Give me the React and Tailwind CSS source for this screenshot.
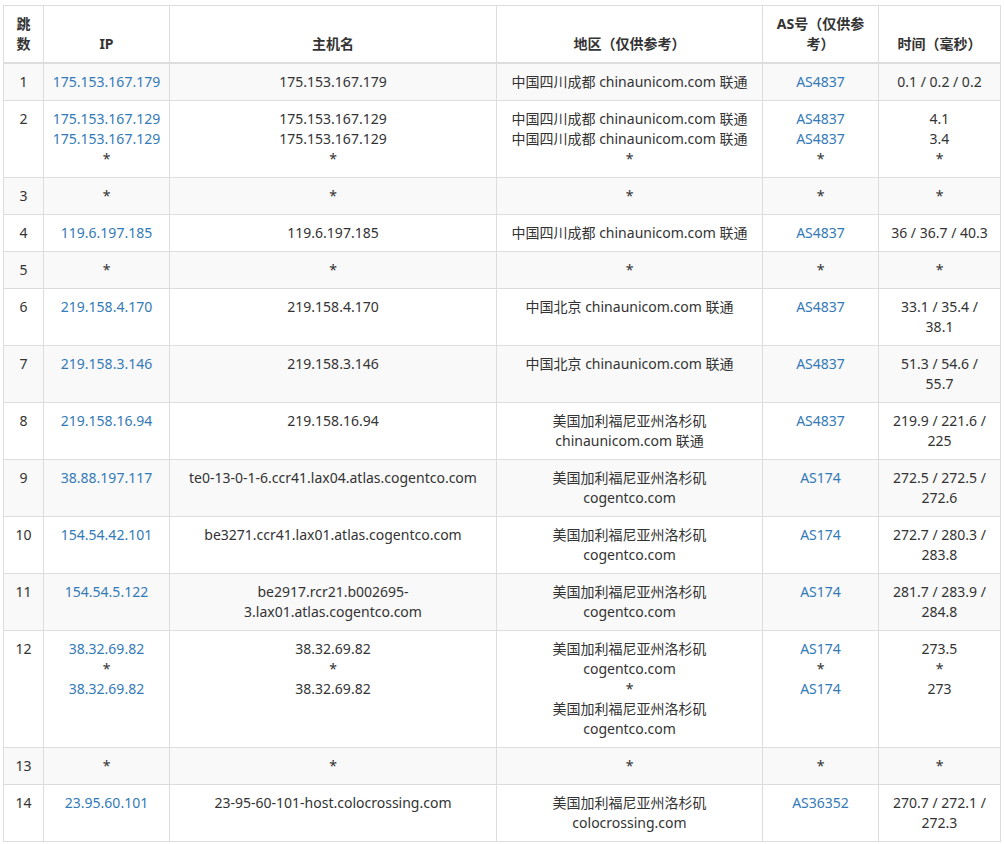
const rows = [
  ["1", ["175.153.167.179"], ["175.153.167.179"], ["中国四川成都 chinaunicom.com 联通"], ["AS4837"], ["0.1 / 0.2 / 0.2"]],
  ["2", ["175.153.167.129", "175.153.167.129", "*"], ["175.153.167.129", "175.153.167.129", "*"], ["中国四川成都 chinaunicom.com 联通", "中国四川成都 chinaunicom.com 联通", "*"], ["AS4837", "AS4837", "*"], ["4.1", "3.4", "*"]],
  ["3", ["*"], ["*"], ["*"], ["*"], ["*"]],
  ["4", ["119.6.197.185"], ["119.6.197.185"], ["中国四川成都 chinaunicom.com 联通"], ["AS4837"], ["36 / 36.7 / 40.3"]],
  ["5", ["*"], ["*"], ["*"], ["*"], ["*"]],
  ["6", ["219.158.4.170"], ["219.158.4.170"], ["中国北京 chinaunicom.com 联通"], ["AS4837"], ["33.1 / 35.4 /", "38.1"]],
  ["7", ["219.158.3.146"], ["219.158.3.146"], ["中国北京 chinaunicom.com 联通"], ["AS4837"], ["51.3 / 54.6 /", "55.7"]],
  ["8", ["219.158.16.94"], ["219.158.16.94"], ["美国加利福尼亚州洛杉矶", "chinaunicom.com 联通"], ["AS4837"], ["219.9 / 221.6 /", "225"]],
  ["9", ["38.88.197.117"], ["te0-13-0-1-6.ccr41.lax04.atlas.cogentco.com"], ["美国加利福尼亚州洛杉矶", "cogentco.com"], ["AS174"], ["272.5 / 272.5 /", "272.6"]],
  ["10", ["154.54.42.101"], ["be3271.ccr41.lax01.atlas.cogentco.com"], ["美国加利福尼亚州洛杉矶", "cogentco.com"], ["AS174"], ["272.7 / 280.3 /", "283.8"]],
  ["11", ["154.54.5.122"], ["be2917.rcr21.b002695-", "3.lax01.atlas.cogentco.com"], ["美国加利福尼亚州洛杉矶", "cogentco.com"], ["AS174"], ["281.7 / 283.9 /", "284.8"]],
  ["12", ["38.32.69.82", "*", "38.32.69.82"], ["38.32.69.82", "*", "38.32.69.82"], ["美国加利福尼亚州洛杉矶", "cogentco.com", "*", "美国加利福尼亚州洛杉矶", "cogentco.com"], ["AS174", "*", "AS174"], ["273.5", "*", "273"]],
  ["13", ["*"], ["*"], ["*"], ["*"], ["*"]],
  ["14", ["23.95.60.101"], ["23-95-60-101-host.colocrossing.com"], ["美国加利福尼亚州洛杉矶", "colocrossing.com"], ["AS36352"], ["270.7 / 272.1 /", "272.3"]],
];

function Lines({ items, link }) {
  return items.map((t, i) => (
    <div key={i} className={link && t !== "*" ? "text-[#337ab7]" : ""}>{t}</div>
  ));
}

export default function App() {
  const th = "border border-[#ddd] border-b-2 px-2 py-2 align-bottom text-center font-bold";
  const td = "border border-[#ddd] px-2 py-2 align-top text-center";
  return (
    <div className="bg-white pt-[5px] pl-[3px] w-[1004px] min-h-[844px] text-[14px] leading-[20px] text-[#333]" style={{ fontFamily: '"Noto Sans", "Noto Sans CJK SC", sans-serif' }}>
      <table className="table-fixed border-collapse w-[997px]">
        <colgroup>
          <col className="w-[40px]" />
          <col className="w-[126px]" />
          <col className="w-[327px]" />
          <col className="w-[266px]" />
          <col className="w-[116px]" />
          <col className="w-[122px]" />
        </colgroup>
        <thead>
          <tr>
            <th className={th}>跳数</th>
            <th className={th}>IP</th>
            <th className={th}>主机名</th>
            <th className={th}>地区（仅供参考）</th>
            <th className={th}>AS号（仅供参考）</th>
            <th className={th}>时间（毫秒）</th>
          </tr>
        </thead>
        <tbody>
          {rows.map((r, i) => (
            <tr key={i} className={i % 2 === 0 ? "bg-[#f9f9f9]" : "bg-white"}>
              <td className={td}>{r[0]}</td>
              <td className={td}><Lines items={r[1]} link /></td>
              <td className={td}><Lines items={r[2]} /></td>
              <td className={td}><Lines items={r[3]} /></td>
              <td className={td}><Lines items={r[4]} link /></td>
              <td className={td}><Lines items={r[5]} /></td>
            </tr>
          ))}
        </tbody>
      </table>
    </div>
  );
}
